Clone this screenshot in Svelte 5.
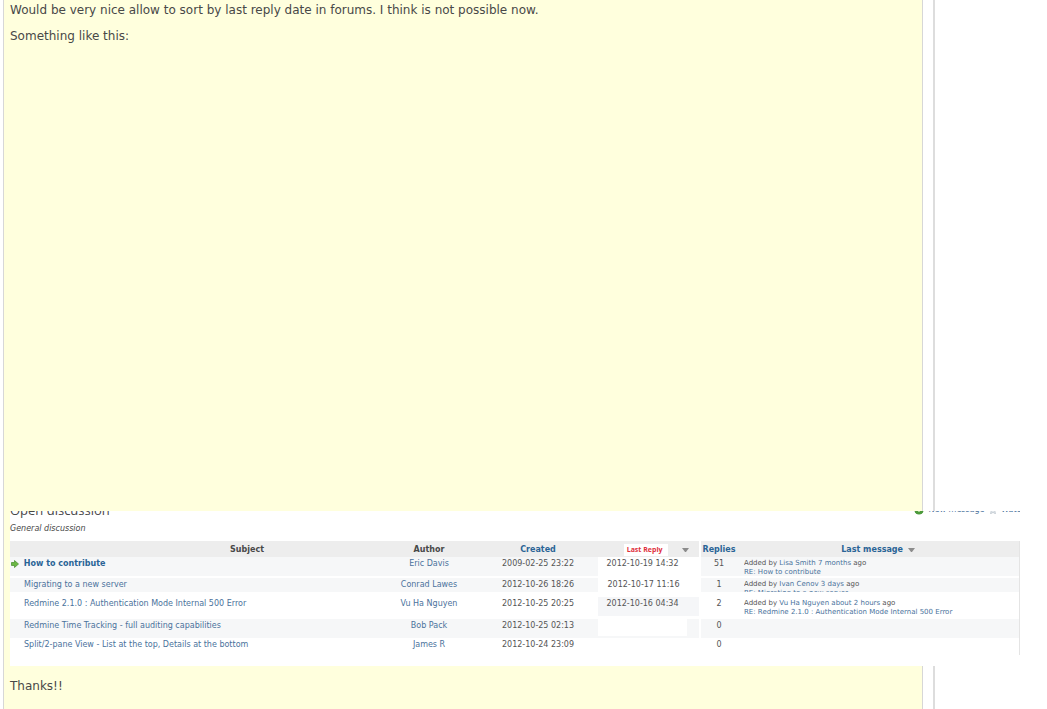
<script lang="ts">
  const topics = [
    {
      subject: 'How to contribute',
      author: 'Eric Davis',
      created: '2009-02-25 23:22',
      lastReply: '2012-10-19 14:32',
      replies: 51,
      sticky: true,
      row: 'first',
      last: { who: 'Lisa Smith', when: '7 months', title: 'RE: How to contribute' }
    },
    {
      subject: 'Migrating to a new server',
      author: 'Conrad Lawes',
      created: '2012-10-26 18:26',
      lastReply: '2012-10-17 11:16',
      replies: 1,
      row: 'second',
      last: { who: 'Ivan Cenov', when: '3 days', title: 'RE: Migrating to a new server' }
    },
    {
      subject: 'Redmine 2.1.0 : Authentication Mode Internal 500 Error',
      author: 'Vu Ha Nguyen',
      created: '2012-10-25 20:25',
      lastReply: '2012-10-16 04:34',
      replies: 2,
      row: 'third',
      last: {
        who: 'Vu Ha Nguyen',
        when: 'about 2 hours',
        title: 'RE: Redmine 2.1.0 : Authentication Mode Internal 500 Error'
      }
    },
    {
      subject: 'Redmine Time Tracking - full auditing capabilities',
      author: 'Bob Pack',
      created: '2012-10-25 02:13',
      lastReply: '',
      replies: 0,
      row: 'fourth'
    },
    {
      subject: 'Split/2-pane View - List at the top, Details at the bottom',
      author: 'James R',
      created: '2012-10-24 23:09',
      lastReply: '',
      replies: 0,
      row: 'fifth'
    }
  ];
</script>

<main>
  <div class="issue">
    <p>Would be very nice allow to sort by last reply date in forums. I think is not possible now.</p>
    <p>Something like this:</p>

    <section class="forum">
      <div class="title-bar">
        <h2>Open discussion</h2>
        <div class="contextual">
          <a href="#new">
            <svg width="10" height="10" viewBox="0 0 10 10">
              <circle cx="5" cy="5" r="4.6" fill="#4c9a3b" />
              <path d="M5 2v5M2 5h6" stroke="#d9f0cf" stroke-width="1.2" />
            </svg>
            New message
          </a>
          <a href="#watch">
            <svg width="8" height="8" viewBox="0 0 10 10">
              <path d="M5 0l1.5 3.4 3.5.4-2.6 2.4.7 3.6L5 8 1.9 9.8l.7-3.6L0 3.8l3.500-.4z" fill="#e4e8ec" stroke="#a9b4be" stroke-width=".7" />
            </svg>
            Watch
          </a>
        </div>
      </div>
      <p class="description">General discussion</p>

      <table>
        <colgroup>
          <col />
          <col class="col-author" />
          <col class="col-created" />
          <col class="col-reply" />
          <col class="col-replies" />
          <col class="col-last" />
        </colgroup>
        <thead>
          <tr>
            <th class="subject">Subject</th>
            <th>Author</th>
            <th><a href="#created">Created</a></th>
            <th class="reply">
              <span class="label">Last Reply</span>
              <svg class="arrow" width="7" height="4" viewBox="0 0 7 4"><path d="M0 0h7L4 4H3z" fill="#8c8c8c" /></svg>
            </th>
            <th><a href="#replies">Replies</a></th>
            <th>
              <a class="sorted" href="#last">Last message</a>
              <svg width="7" height="4" viewBox="0 0 7 4"><path d="M0 0h7L4 4H3z" fill="#8c8c8c" /></svg>
            </th>
          </tr>
        </thead>
        <tbody>
          {#each topics as topic}
            <tr class={topic.row}>
              <td class="subject" class:sticky={topic.sticky}>
                {#if topic.sticky}
                  <svg class="go" width="8" height="8" viewBox="0 0 8 8">
                    <path d="M.5 2.500h3V.5L7.500 4l-4 3.500v-2h-3z" fill="#6cb844" stroke="#4f9438" stroke-width=".8" />
                  </svg>
                {/if}
                <a href="#topic">{topic.subject}</a>
              </td>
              <td><a href="#user">{topic.author}</a></td>
              <td>{topic.created}</td>
              <td class="reply"><span class="date">{topic.lastReply}</span></td>
              <td>{topic.replies}</td>
              <td class="last">
                {#if topic.last}
                  <div>
                    Added by <a href="#user">{topic.last.who}</a> <a href="#activity">{topic.last.when}</a> ago<br />
                    <a href="#message">{topic.last.title}</a>
                  </div>
                {/if}
              </td>
            </tr>
          {/each}
        </tbody>
      </table>
    </section>

    <p>Thanks!!</p>
  </div>
</main>

<style>
:global(body) {
  background: #fff;
  overflow: hidden;
}

main {
  margin-right: 112px;
  padding: 0 10px 0 3px;
  border-right: 2px solid #ddd;
  font-family: Verdana, "DejaVu Sans", sans-serif;
  font-size: 12px;
  line-height: 20px;
  color: #484848;
}

.issue {
  padding: 0 6px 20px;
  border-left: 1px solid #d7d7d7;
  border-right: 1px solid #d7d7d7;
  background: #ffffdd;
}

p {
  margin: 0 0 6px;
}

a {
  color: #4a729c;
  text-decoration: none;
}

/* wider than the note, runs over its right border */
.forum {
  position: relative;
  margin: 465px -131px 10px 0;
  padding: 0 27px 11px 0;
  background: #fff;
  font-size: 8px;
  line-height: 14px;
}

.title-bar {
  display: flex;
  justify-content: space-between;
  align-items: flex-end;
  height: 8px;
  overflow: hidden;
}

h2 {
  margin: 0;
  font: 500 13px/18px "Open Sans", sans-serif;
  color: #484848;
}

.contextual {
  display: flex;
  gap: 4px;
  margin-right: -6px;
  font-size: 8px;
  line-height: 18px;
}

.contextual svg {
  margin-right: 2px;
  vertical-align: middle;
}

.description {
  margin: 3px 0 5px;
  font-style: italic;
}

table {
  width: 100%;
  table-layout: fixed;
  border-collapse: separate;
  border-spacing: 0;
  border-right: 1px solid #e4e4e4;
}

.col-author { width: 110px; }
.col-created { width: 108px; }
.col-reply { width: 109px; }
.col-replies { width: 36px; }
.col-last { width: 282px; }

th {
  height: 14px;
  padding: 2px 0 0;
  background: #ededed;
  font-size: 8px;
  line-height: 14px;
  white-space: nowrap;
}

th a,
.sticky a {
  color: #2a6496;
}

th.subject {
  padding-left: 110px;
}

.sorted {
  margin-right: 2px;
}

.reply {
  position: relative;
  border-right: 2px solid #fff;
}

th.reply {
  padding-left: 22px;
}

.label {
  display: inline-block;
  padding: 0 5px 0 3px;
  background: #fff;
  font: bold 7px/12px "Open Sans", sans-serif;
  color: #e0303c;
}

.arrow {
  margin-left: 12px;
}

td {
  padding: 0;
  text-align: center;
  vertical-align: top;
  white-space: nowrap;
  color: #555;
}

td.subject {
  padding-left: 14px;
  text-align: left;
}

td.sticky {
  padding-left: 1px;
  font-weight: bold;
}

.go {
  margin-right: 2px;
  vertical-align: middle;
}

td.last {
  padding-left: 7px;
  text-align: left;
}

.last div {
  height: 14px;
  padding-top: 2px;
  box-sizing: border-box;
  overflow: hidden;
  font-size: 7px;
  line-height: 9px;
}

.date {
  display: block;
  margin-left: 6px;
  padding-right: 12px;
  background: #fff;
}

.first td {
  height: 19px;
  border-bottom: 2px solid #fff;
  background: #f6f7f8;
}

.first .date {
  height: 19px;
}

.first .last div,
.third .last div {
  height: 19px;
}

.second td {
  height: 14px;
  background: #f6f7f8;
}

.second .date {
  height: 14px;
  padding-right: 10px;
}

.third td {
  height: 22px;
  padding-top: 5px;
}

.third .date {
  height: 19px;
  background: #f5f6f8;
}

.fourth td {
  height: 19px;
  background: #f6f7f8;
}

.fourth .date {
  height: 17px;
  margin-right: 12px;
  padding: 0;
}

.fifth td {
  height: 17px;
}
</style>
